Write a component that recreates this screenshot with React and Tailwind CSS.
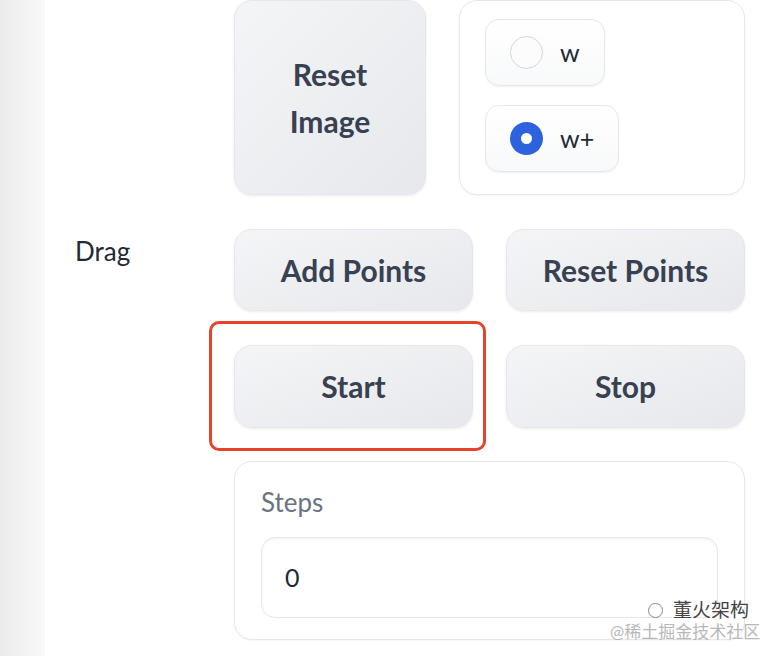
import React from 'react'

const font = { fontFamily: 'Lato, "Noto Sans CJK SC", sans-serif' }

function GrayButton({ children, className = '' }) {
  return (
    <button
      className={`flex items-center justify-center rounded-[18px] border border-[#e5e7eb] bg-gradient-to-br from-[#f4f5f7] to-[#e6e8eb] text-[30px] font-bold text-[#374151] shadow-[0_1px_3px_rgba(0,0,0,0.08)] ${className}`}
    >
      {children}
    </button>
  )
}

function RadioItem({ label, checked }) {
  return (
    <label className="flex h-[67px] items-center gap-[17px] self-start rounded-[14px] border border-[#e5e7eb] bg-gradient-to-b from-white to-[#f8f9fa] pl-[24px] pr-[24px] shadow-[0_1px_2px_rgba(0,0,0,0.06)]">
      {checked ? (
        <span className="flex h-[33px] w-[33px] items-center justify-center rounded-full bg-[#2d62df]">
          <span className="h-[11px] w-[11px] rounded-full bg-white" />
        </span>
      ) : (
        <span className="h-[33px] w-[33px] rounded-full border-[1.5px] border-[#d4d6da] bg-[#fcfcfc]" />
      )}
      <span className="text-[25px] text-[#1f2937]">{label}</span>
    </label>
  )
}

export default function App() {
  return (
    <div className="relative flex h-[656px] w-[774px] overflow-hidden bg-white" style={font}>
      <div className="w-[45px] shrink-0 bg-gradient-to-r from-[#ebebeb] to-[#f9f9f9]" />
      <div className="grid flex-1 grid-cols-[189px_511px] content-start gap-y-[34px]">
        <div />
        <div className="flex h-[195px] gap-[33px]">
          <GrayButton className="w-[192px] flex-col leading-[47px]">
            <span>Reset</span>
            <span>Image</span>
          </GrayButton>
          <div className="flex flex-1 flex-col gap-[19px] rounded-[18px] border border-[#e5e7eb] bg-white pl-[25px] pt-[18px] shadow-[0_1px_2px_rgba(0,0,0,0.04)]">
            <RadioItem label="w" />
            <RadioItem label="w+" checked />
          </div>
        </div>

        <div className="pl-[30px] pt-[3px] text-[26px] text-[#1f2937]">Drag</div>
        <div className="flex flex-col gap-[33px]">
          <div className="grid grid-cols-2 gap-x-[33px] gap-y-[34px]">
            <GrayButton className="h-[82px]">Add Points</GrayButton>
            <GrayButton className="h-[82px]">Reset Points</GrayButton>
            <div className="relative">
              <GrayButton className="h-[83px] w-full">Start</GrayButton>
              <div className="pointer-events-none absolute -bottom-[23px] -left-[25px] -right-[13px] -top-[24px] rounded-[10px] border-[3px] border-[#e5442b]" />
            </div>
            <GrayButton className="h-[83px]">Stop</GrayButton>
          </div>
          <div className="flex h-[179px] flex-col rounded-[18px] border border-[#e5e7eb] bg-white px-[26px] pt-[23px] shadow-[0_1px_2px_rgba(0,0,0,0.04)]">
            <span className="text-[26px] leading-[34px] text-[#6b7280]">Steps</span>
            <div className="mt-[18px] flex h-[81px] items-center rounded-[14px] border border-[#e5e7eb] bg-white pl-[23px] text-[25px] text-[#1f2937] shadow-[inset_0_1px_3px_rgba(0,0,0,0.05)]">
              0
            </div>
          </div>
        </div>
      </div>

      <div className="pointer-events-none absolute left-[610px] top-[621px] text-[17px] leading-[22px] text-[#b8b8b8]">
        @稀土掘金技术社区
      </div>
      <div className="pointer-events-none absolute left-[648px] top-[599px] flex items-center gap-[10px] text-[19px] leading-[22px] text-[#444]">
        <span className="h-[15px] w-[15px] rounded-full border-[1.5px] border-[#888]" />
        <span>董火架构</span>
      </div>
    </div>
  )
}
